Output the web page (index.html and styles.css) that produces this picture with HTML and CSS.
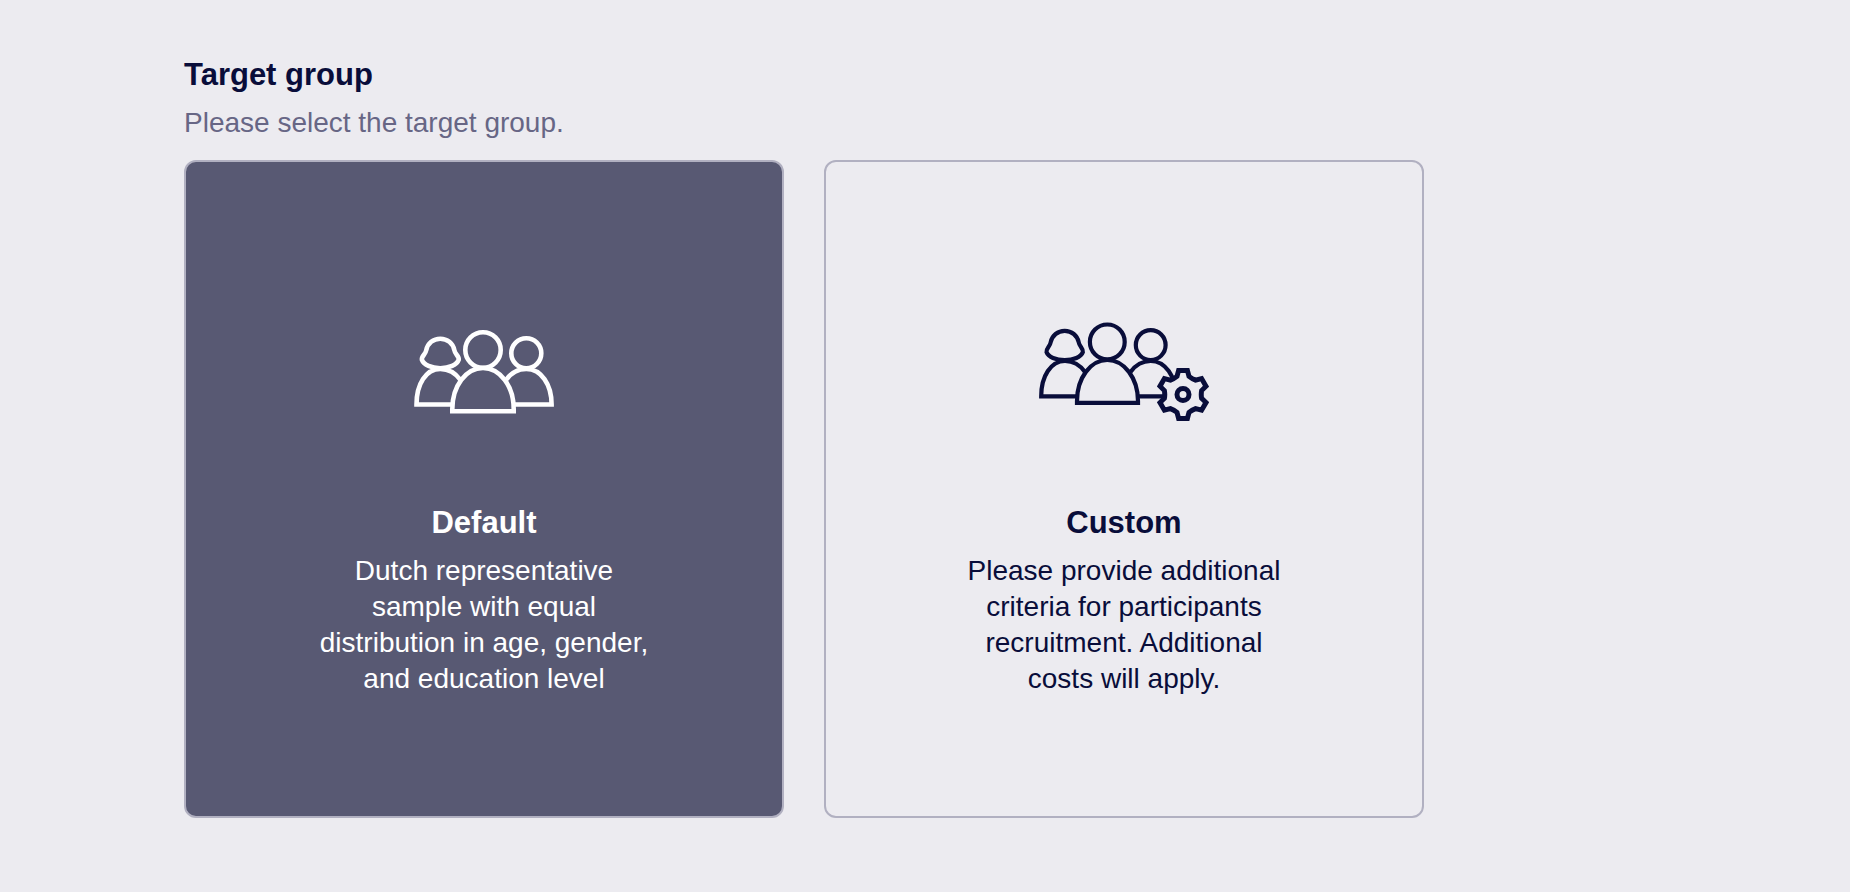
FILE: index.html
```html
<!DOCTYPE html>
<html lang="en">
<head>
    <meta charset="UTF-8">
    <meta name="viewport" content="width=device-width, initial-scale=1.0">
    <title>Target group</title>
    <link rel="stylesheet" href="styles.css">
</head>
<body>
<form class="page">
    <h1 class="title">Target group</h1>
    <p class="subtitle" id="hint">Please select the target group.</p>
    <div class="cards" role="radiogroup" aria-labelledby="hint">
        <label class="card" for="default">
            <input class="radio" type="radio" name="group" id="default" value="default" checked>
            <span class="icon">
                <svg width="140" height="84" viewBox="0 0 140 84" fill="none" stroke="currentColor" stroke-width="4.6">
                    <!-- left -->
                    <path d="M26.3 8.7C19.3 8.7 13.7 13.2 12.3 20C11.6 24.5 7.2 26.2 7.9 29.8C9.6 34.8 17.6 38.2 26.3 38.2S43 34.8 44.7 29.8C45.4 26.2 41 24.5 40.3 20C38.9 13.2 33.3 8.7 26.3 8.7Z" stroke-linejoin="round"/>
                    <path d="M37.5 74.5H2.5C2.5 54 12 39 26.3 39C34.5 39 41.5 43 46.5 50"/>
                    <!-- right -->
                    <circle cx="112.3" cy="23.3" r="15"/>
                    <path d="M101 74.5H137.6C137.6 54 127 39 112.3 39C104 39 97 43 92 50"/>
                    <!-- middle -->
                    <circle cx="69" cy="20" r="17.7"/>
                    <path d="M38.3 81.3V79C38.3 56 52 38 69 38S99.7 56 99.7 79V81.3Z"/>
                </svg>
            </span>
            <span class="name">Default</span>
            <span class="text">Dutch representative sample with equal distribution in age, gender, and education level</span>
        </label>
        <label class="card" for="custom">
            <input class="radio" type="radio" name="group" id="custom" value="custom">
            <span class="icon">
                <svg width="170" height="100" viewBox="0 0 170 100" fill="none" stroke="currentColor" stroke-width="4.2">
                    <path d="M25.7 8.9C18.7 8.9 13.1 13.4 11.7 20.2C11 24.7 6.8 26.4 7.5 30C9.2 35 17 38.2 25.7 38.2S42.2 35 43.9 30C44.6 26.4 40.4 24.7 39.7 20.2C38.3 13.4 32.7 8.9 25.7 8.9Z" stroke-linejoin="round"/>
                    <path d="M37.5 74.3H2.2C2.2 54 12 39 26 39C34 39 41 43 46 50"/>
                    <circle cx="111.7" cy="23.1" r="14.9"/>
                    <path d="M100 74.3H137C137 54 126 39 111.7 39C103.5 39 96.5 43 91.5 50"/>
                    <circle cx="68.3" cy="19.9" r="17.4"/>
                    <path d="M38 80.8V79C38 56 51.5 38 68.3 38S99 56 99 79V80.8Z"/>
                    <!-- gear -->
                    <g class="gear" transform="translate(144 72.4)">
                        <path d="M-6-18L-4.4-24H4.4L6-18Q9-15.6 12.6-14.2L18.6-15.8L23-8.2L18.6-3.8Q17.9 0 18.6 3.8L23 8.2L18.6 15.8L12.6 14.2Q9 15.6 6 18L4.4 24H-4.4L-6 18Q-9 15.6-12.6 14.2L-18.6 15.8L-23 8.2L-18.6 3.8Q-17.9 0-18.6-3.8L-23-8.2L-18.6-15.8L-12.6-14.2Q-9-15.6-6-18Z"/>
                        <circle r="6"/>
                    </g>
                </svg>
            </span>
            <span class="name">Custom</span>
            <span class="text">Please provide additional criteria for participants recruitment. Additional costs will apply.</span>
        </label>
    </div>
</form>
</body>
</html>
```
FILE: styles.css
```css
*{box-sizing:border-box;}
body{margin:0;background:#ecebf0;color:#090d3a;font-family:"Liberation Sans",Arial,Helvetica,sans-serif;}
.page{max-width:1608px;padding:55px 184px 72px;}
.title{margin:0 0 10px;font-size:31px;line-height:40px;}
.subtitle{margin:0 0 19px;font-size:28px;line-height:36px;color:#676685;}
.cards{display:grid;grid-template-columns:1fr 1fr;gap:40px;}
.card{display:flex;flex-direction:column;align-items:center;padding:160px 40px 119px;
border:2px solid #b1b0c1;border-radius:12px;text-align:center;cursor:pointer;}
.card:has(.radio:checked){background:#585973;color:#fff;}
.card:has(.radio:focus-visible){outline:2px solid #090d3a;outline-offset:2px;}
/* the whole card is the control */
.radio{appearance:none;position:absolute;margin:0;}
.icon{display:flex;align-items:center;height:100px;margin-bottom:81px;}
.gear{fill:#ecebf0;stroke-width:5px;}
.name{margin-bottom:10px;font-size:31px;line-height:40px;font-weight:bold;}
.text{max-width:340px;font-size:28px;line-height:36px;}

@media (max-width:1200px){
.page{padding:32px 24px;}
.cards{gap:24px;}
}
@media (max-width:700px){
.cards{grid-template-columns:1fr;}
.card{padding:48px 24px;}
.icon{margin-bottom:32px;}
}
```
